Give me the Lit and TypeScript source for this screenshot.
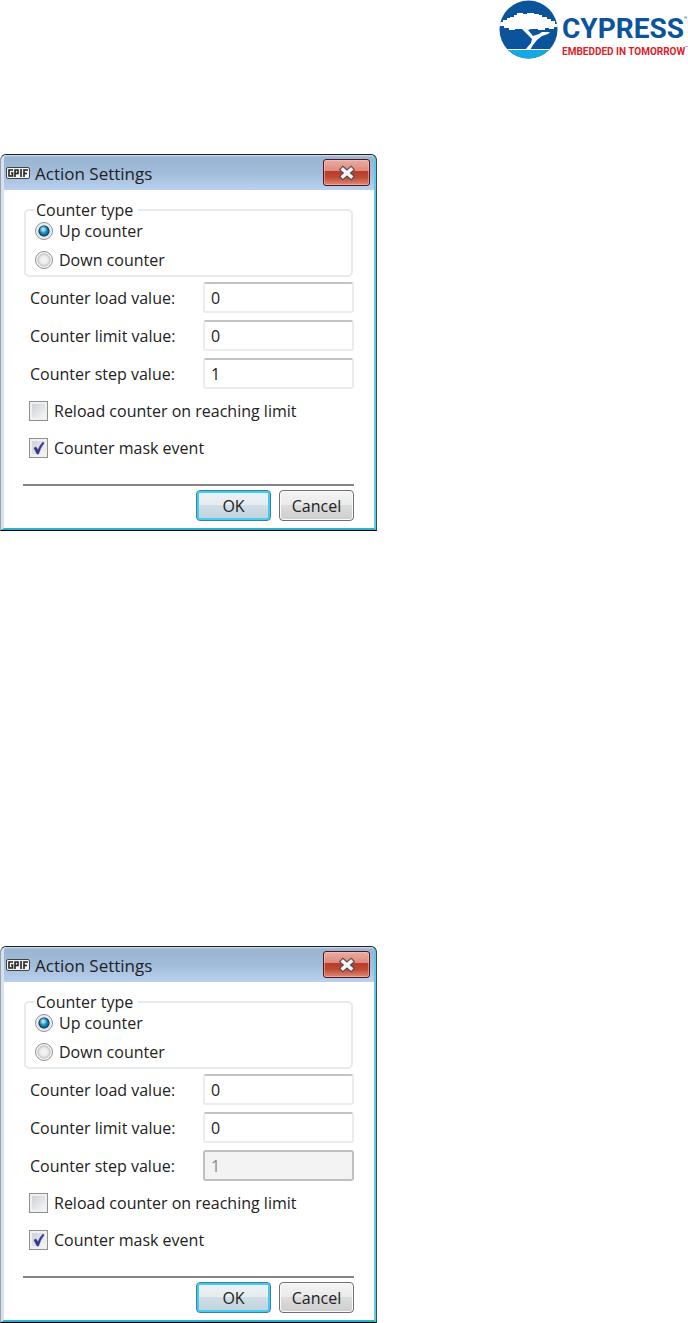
import { LitElement, html, css, svg } from "lit";
import { customElement, property } from "lit/decorators.js";

@customElement("brand-logo")
class BrandLogo extends LitElement {
  static styles = css`
    :host {
      display: flex;
      gap: 4px;
      font-family: Roboto, sans-serif;
      font-weight: 700;
      white-space: nowrap;
    }
    .emblem { width: 59px; height: 59px; flex: none; }
    .words { display: flex; flex-direction: column; padding-top: 14px; width: 126px; }
    .name { display: flex; font-size: 28px; line-height: 30px; color: #0b549c; }
    .tagline { display: flex; font-size: 10px; line-height: 16px; color: #d8232e; }
    .mark { font-size: 4px; line-height: 8px; }
  `;
  render() {
    return html`
      <svg class="emblem" viewBox="0 0 59 59" aria-hidden="true">
        ${svg`
        <defs><clipPath id="disc"><circle cx="29.5" cy="29.5" r="29" /></clipPath></defs>
        <g clip-path="url(#disc)">
          <rect width="59" height="59" fill="#0b549c" />
          <rect y="50" width="59" height="9" fill="#14a9e0" />
          <path fill="#fff" d="M0 22H4V20H8V18H11V17H15V15H18V13H24V14H28V13H35V14H40V15H43V17H48V19H52V21H56V24H58V27H55V29H50V28H46V30H39V29H32L29 30L34 36L40 34L43 32H51L49 34L43 36L38 40L34 45L31 50H26L32 43L33 39L25 31L23 29H16V30H10V28H5V26H0Z" />
          <rect y="49" width="59" height="1" fill="#fff" />
        </g>`}
      </svg>
      <div class="words">
        <span class="name">CYPRESS<span class="mark">®</span></span>
        <span class="tagline">EMBEDDED IN TOMORROW<span class="mark">™</span></span>
      </div>
    `;
  }
}

@customElement("action-dialog")
class ActionDialog extends LitElement {
  @property({ type: Boolean }) stepDisabled = false;

  static styles = css`
    :host { display: block; }
    * { box-sizing: border-box; }
    .window {
      border: 1px solid #222;
      border-left-color: #a0a0a0;
      border-right-color: #4a4a4a;
      border-bottom-color: #000;
      border-radius: 6px 6px 0 0;
      background: #222;
    }
    .frame {
      border-left: 3px solid #d5e2f2;
      border-right: 2px solid #5acdec;
      border-bottom: 2px solid #2bb3cb;
      border-radius: 5px 5px 0 0;
      background: #fff;
      overflow: hidden;
    }
    .titlebar {
      display: flex;
      align-items: center;
      height: 35px;
      padding: 0 4px 0 5px;
      gap: 5px;
      background: linear-gradient(#d5e3f0 0, #9ab5d1 2px, #a1bcdb 50%, #b9d1ed 100%);
      margin-left: -3px;
    }
    .glyph { width: 24px; height: 12px; flex: none; }
    .title { flex: 1; font-size: 17px; font-weight: 400; line-height: 24px; margin: 0; padding-top: 2px; }
    .close {
      width: 47px;
      height: 27px;
      padding: 0;
      border: 1px solid #4c1825;
      border-radius: 3px;
      background: linear-gradient(#eaaca2, #dc8a7c 45%, #b93c28 46%, #c04a34 70%, #dc8b78);
      box-shadow: inset 0 0 0 1px rgba(255, 200, 190, 0.5);
      display: grid;
      place-items: center;
    }
    .close svg { width: 18px; height: 16px; }
    .body { padding: 10px 20px 7px 19px; font-size: 16px; line-height: 20px; }
    .group {
      margin: 0 1px 0 1px;
      padding: 0 10px 3px 9px;
      border: 2px solid #e6ebef;
      border-radius: 5px;
      min-width: 0;
    }
    .group legend { padding: 0 5px 0 1px; line-height: 20px; }
    .option { display: flex; align-items: center; gap: 6px; height: 24px; }
    .option + .option { margin-top: 5px; }
    .options { margin-top: -1px; }
    .fields { display: grid; gap: 7px; margin-top: 5px; }
    .field { display: grid; grid-template-columns: 173px 1fr; align-items: center; padding-left: 7px; }
    .text {
      width: 100%;
      height: 31px;
      padding: 0 6px;
      border: 2px solid #e9edf2;
      border-top-color: #c2c3c8;
      border-radius: 3px;
      background: #fff;
      color: #222;
      font: inherit;
    }
    .text:disabled { background: #f3f3f3; border-color: #bcc0c4; color: #8a8a8a; }
    input[type="radio"], input[type="checkbox"] { appearance: none; flex: none; margin: 0; }
    input[type="radio"] {
      width: 18px;
      height: 18px;
      border: 1px solid #8e8f8f;
      border-radius: 50%;
      background: radial-gradient(circle, #f2f2f2 0 3px, #dedede 5px, #c2c2c2 6px, #f4f4f4 7px);
    }
    input[type="radio"]:checked {
      background: radial-gradient(circle at 45% 40%, #9be4f7 0 1px, transparent 4px),
        radial-gradient(circle, #1787b9 0 3px, #123f63 5px, #dfe3e6 6px, #f4f4f4 8px);
    }
    input[type="checkbox"] {
      width: 19px;
      height: 20px;
      border: 1px solid #8e8f8f;
      background: linear-gradient(135deg, #cdd0d5, #f5f6f7) center / 13px 14px no-repeat #f0f0f0;
    }
    .tick { position: relative; display: flex; }
    .tick svg { position: absolute; inset: 0; width: 19px; height: 20px; pointer-events: none; }
    .checks { display: grid; gap: 17px; margin: 12px 0 0 6px; }
    .check { display: flex; align-items: center; gap: 6px; height: 20px; }
    .rule { height: 2px; margin: 26px 0 4px; border: 0; background: #858585; }
    .actions { display: flex; justify-content: flex-end; gap: 8px; }
    .button {
      width: 75px;
      height: 31px;
      padding: 1px 0 0;
      border: 1px solid #707070;
      border-radius: 4px;
      background: linear-gradient(#f3f3f3, #ebebeb 49%, #dcdcdc 50%, #cdcdcd);
      box-shadow: inset 0 0 0 1px #fafafa;
      color: #222;
      font: inherit;
    }
    .default {
      border-color: #3c7fa0;
      background: linear-gradient(#edf2f5, #e4ecf0 49%, #d0dee6 50%, #bfd2de);
      box-shadow: inset 0 0 0 2px #43cdf0;
    }
  `;

  private field(id: string, label: string, value: string, disabled = false) {
    return html`<div class="field">
      <label for=${id}>${label}</label>
      <input class="text" id=${id} type="text" .value=${value} ?disabled=${disabled} />
    </div>`;
  }

  render() {
    return html`
      <section class="window" aria-labelledby="title">
        <div class="frame">
          <header class="titlebar">
            <svg class="glyph" viewBox="0 0 24 12" aria-hidden="true">
              <rect x="0.5" y="0.5" width="23" height="11" rx="1.5" fill="#f4f4f4" stroke="#444" />
              <path fill="none" stroke="#222" stroke-width="1.6" d="M7 3H3V9H6.500V6H5M9 10V3H12V6.500H9M15 2V10M18 10V3H22M18 6.500H21" />
            </svg>
            <h2 class="title" id="title">Action Settings</h2>
            <button class="close" aria-label="Close">
              <svg viewBox="0 0 18 16" aria-hidden="true">
                <path d="M5 4.500L13 11.500M13 4.500L5 11.500" stroke="#5a4550" stroke-width="5.800" stroke-linecap="square" />
                <path d="M5 4.500L13 11.500M13 4.500L5 11.500" stroke="#f4f4f4" stroke-width="3.600" stroke-linecap="square" />
              </svg>
            </button>
          </header>
          <div class="body">
            <fieldset class="group">
              <legend>Counter type</legend>
              <div class="options">
                <label class="option"><input type="radio" name="type" checked />Up counter</label>
                <label class="option"><input type="radio" name="type" />Down counter</label>
              </div>
            </fieldset>
            <div class="fields">
              ${this.field("load", "Counter load value:", "0")}
              ${this.field("limit", "Counter limit value:", "0")}
              ${this.field("step", "Counter step value:", "1", this.stepDisabled)}
            </div>
            <div class="checks">
              <label class="check"><input type="checkbox" />Reload counter on reaching limit</label>
              <label class="check">
                <span class="tick">
                  <input type="checkbox" checked />
                  <svg viewBox="0 0 19 20" aria-hidden="true">
                    <path d="M5 10L7 9L9 12Q11 7 14 4L15 5Q11 10 9.500 16H8Z" fill="#33368c" stroke="#33368c" stroke-width="0.600" />
                  </svg>
                </span>Counter mask event</label>
            </div>
            <hr class="rule" />
            <div class="actions">
              <button class="button default">OK</button>
              <button class="button">Cancel</button>
            </div>
          </div>
        </div>
      </section>
    `;
  }
}

@customElement("app-root")
class AppRoot extends LitElement {
  static styles = css`
    :host {
      display: block;
      background: #fff;
      color: #222;
      font-family: "Open Sans", "Noto Sans", sans-serif;
    }
    .top { display: flex; justify-content: flex-end; height: 154px; }
    .dialogs { display: grid; grid-template-columns: minmax(0, 377px); gap: 415px; }
  `;
  render() {
    return html`
      <header class="top"><brand-logo></brand-logo></header>
      <main class="dialogs">
        <action-dialog></action-dialog>
        <action-dialog .stepDisabled=${true}></action-dialog>
      </main>
    `;
  }
}
